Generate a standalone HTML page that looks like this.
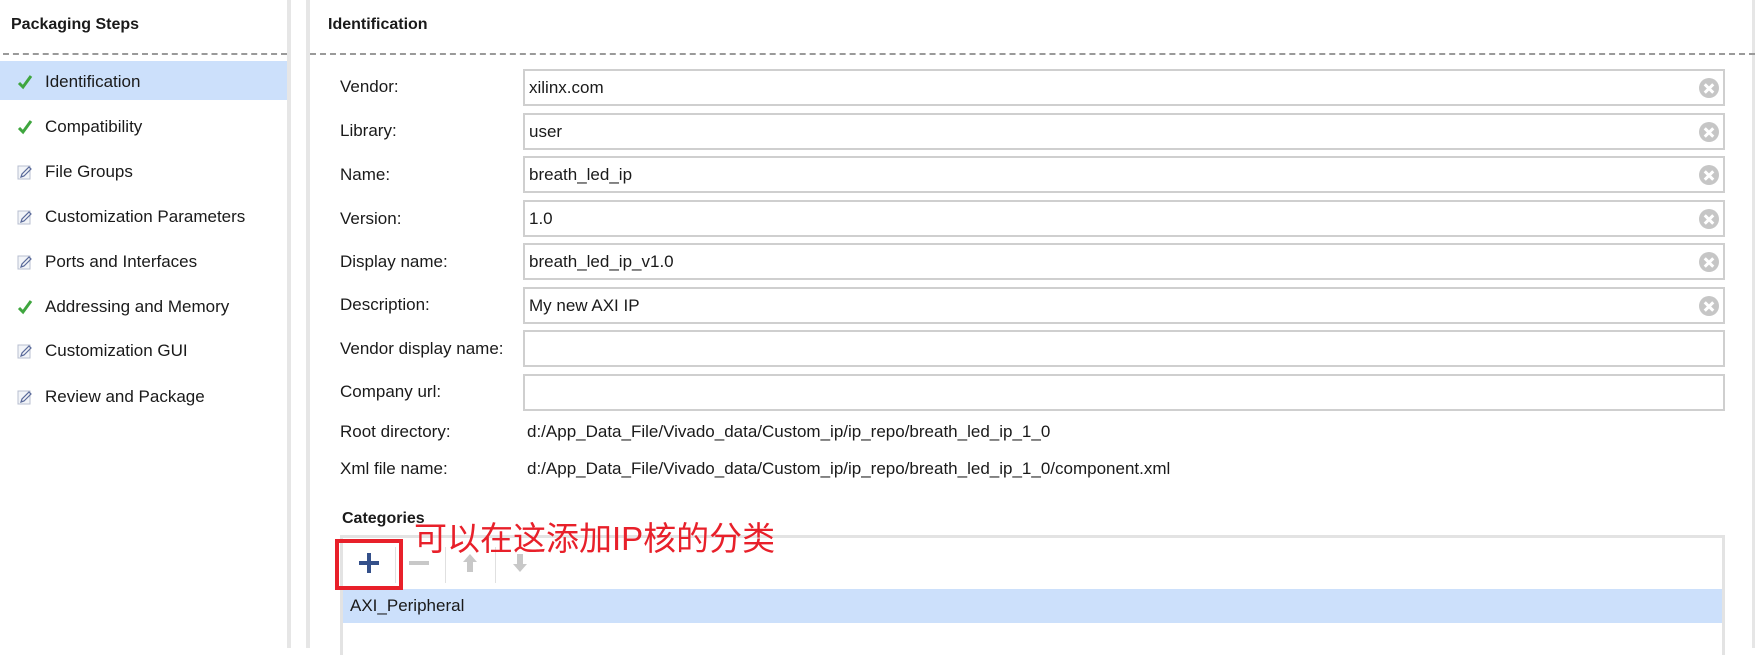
<!DOCTYPE html>
<html><head><meta charset="utf-8"><style>
*{margin:0;padding:0;box-sizing:border-box}
body{width:1755px;height:648px;background:#fff;position:relative;overflow:hidden;font-family:"Liberation Sans","Noto Sans CJK SC",sans-serif;color:#1a1a1a;font-size:17px}
.a{position:absolute;white-space:nowrap}
.dash{position:absolute;height:0;border-top:2px dashed #9a9a9a}
.bar{position:absolute;top:0;height:648px;width:4px;background:#e6e6e6}
.item{position:absolute;left:45px;transform:translateY(-50%)}
.ic{position:absolute;left:17px;transform:translateY(-50%);width:16px;height:16px}
.lbl{position:absolute;left:340px;transform:translateY(-50%)}
.fld{position:absolute;left:523px;width:1202px;height:37px;border:2px solid #cfcfcf;background:#fff;padding-left:4px;line-height:33px}
.clr{position:absolute;right:4px;top:7px;width:20px;height:20px;border-radius:50%;background:#c6c6c6}
.clr:before,.clr:after{content:"";position:absolute;left:4px;top:8.5px;width:12px;height:3px;background:#fff;transform:rotate(45deg)}
.clr:after{transform:rotate(-45deg)}
</style></head><body>
<div class="a" style="left:11px;top:16px;font-weight:bold;font-size:16px">Packaging Steps</div>
<div class="dash" style="left:3px;top:53px;width:284px"></div>
<div class="a" style="left:0;top:61px;width:287px;height:39px;background:#cce0fb"></div>
<div class="bar" style="left:287px"></div>
<div class="bar" style="left:306px"></div>
<div class="a" style="left:1752px;top:0;width:3px;height:648px;background:#e6e6e6"></div>

<svg class="ic" style="top:82px" viewBox="0 0 16 16"><path d="M2 9 L6 13 L14 2" stroke="#3fa63f" stroke-width="3" fill="none"/></svg><div class="item" style="top:82px">Identification</div>
<svg class="ic" style="top:127px" viewBox="0 0 16 16"><path d="M2 9 L6 13 L14 2" stroke="#3fa63f" stroke-width="3" fill="none"/></svg><div class="item" style="top:127px">Compatibility</div>
<svg class="ic" style="top:172px" viewBox="0 0 16 16"><rect x="1" y="2" width="12" height="13" fill="#f2f4f8" stroke="#b8bfd0"/><path d="M4 13 L5 10 L12 3 L14 5 L7 12Z" fill="none" stroke="#5a6a9a" stroke-width="1.2"/></svg><div class="item" style="top:172px">File Groups</div>
<svg class="ic" style="top:217px" viewBox="0 0 16 16"><rect x="1" y="2" width="12" height="13" fill="#f2f4f8" stroke="#b8bfd0"/><path d="M4 13 L5 10 L12 3 L14 5 L7 12Z" fill="none" stroke="#5a6a9a" stroke-width="1.2"/></svg><div class="item" style="top:217px">Customization Parameters</div>
<svg class="ic" style="top:262px" viewBox="0 0 16 16"><rect x="1" y="2" width="12" height="13" fill="#f2f4f8" stroke="#b8bfd0"/><path d="M4 13 L5 10 L12 3 L14 5 L7 12Z" fill="none" stroke="#5a6a9a" stroke-width="1.2"/></svg><div class="item" style="top:262px">Ports and Interfaces</div>
<svg class="ic" style="top:307px" viewBox="0 0 16 16"><path d="M2 9 L6 13 L14 2" stroke="#3fa63f" stroke-width="3" fill="none"/></svg><div class="item" style="top:307px">Addressing and Memory</div>
<svg class="ic" style="top:351px" viewBox="0 0 16 16"><rect x="1" y="2" width="12" height="13" fill="#f2f4f8" stroke="#b8bfd0"/><path d="M4 13 L5 10 L12 3 L14 5 L7 12Z" fill="none" stroke="#5a6a9a" stroke-width="1.2"/></svg><div class="item" style="top:351px">Customization GUI</div>
<svg class="ic" style="top:397px" viewBox="0 0 16 16"><rect x="1" y="2" width="12" height="13" fill="#f2f4f8" stroke="#b8bfd0"/><path d="M4 13 L5 10 L12 3 L14 5 L7 12Z" fill="none" stroke="#5a6a9a" stroke-width="1.2"/></svg><div class="item" style="top:397px">Review and Package</div>

<div class="a" style="left:328px;top:16px;font-weight:bold;font-size:16px">Identification</div>
<div class="dash" style="left:310px;top:53px;width:1445px"></div>

<div class="lbl" style="top:87px">Vendor:</div><div class="fld" style="top:69px">xilinx.com<div class="clr"></div></div>
<div class="lbl" style="top:131px">Library:</div><div class="fld" style="top:113px">user<div class="clr"></div></div>
<div class="lbl" style="top:175px">Name:</div><div class="fld" style="top:156px">breath_led_ip<div class="clr"></div></div>
<div class="lbl" style="top:219px">Version:</div><div class="fld" style="top:200px">1.0<div class="clr"></div></div>
<div class="lbl" style="top:262px">Display name:</div><div class="fld" style="top:243px">breath_led_ip_v1.0<div class="clr"></div></div>
<div class="lbl" style="top:305px">Description:</div><div class="fld" style="top:287px">My new AXI IP<div class="clr"></div></div>
<div class="lbl" style="top:349px">Vendor display name:</div><div class="fld" style="top:330px"></div>
<div class="lbl" style="top:392px">Company url:</div><div class="fld" style="top:374px"></div>
<div class="lbl" style="top:432px">Root directory:</div><div class="a" style="left:527px;top:432px;transform:translateY(-50%)">d:/App_Data_File/Vivado_data/Custom_ip/ip_repo/breath_led_ip_1_0</div>
<div class="lbl" style="top:469px">Xml file name:</div><div class="a" style="left:527px;top:469px;transform:translateY(-50%)">d:/App_Data_File/Vivado_data/Custom_ip/ip_repo/breath_led_ip_1_0/component.xml</div>

<div class="a" style="left:342px;top:510px;font-weight:bold;font-size:16px">Categories</div>
<div class="a" style="left:340px;top:535px;width:1385px;height:120px;border:3px solid #e3e3e3;border-bottom:none"></div>
<div class="a" style="left:343px;top:589px;width:1379px;height:34px;background:#cce0fb"></div>
<div class="a" style="left:350px;top:606px;transform:translateY(-50%)">AXI_Peripheral</div>
<div class="a" style="left:395px;top:547px;width:1px;height:36px;background:#e0e0e0"></div>
<div class="a" style="left:445px;top:547px;width:1px;height:36px;background:#e0e0e0"></div>
<div class="a" style="left:495px;top:547px;width:1px;height:36px;background:#e0e0e0"></div>
<svg class="a" style="left:358px;top:552px" width="22" height="22" viewBox="0 0 22 22"><path d="M11 1V21M1 11H21" stroke="#34508a" stroke-width="4"/></svg>
<div class="a" style="left:409px;top:561px;width:20px;height:4px;background:#c8c8c8"></div>
<svg class="a" style="left:462px;top:553px" width="16" height="20" viewBox="0 0 16 20"><path d="M8 1L15 9H11V19H5V9H1Z" fill="#c8c8c8"/></svg>
<svg class="a" style="left:512px;top:553px" width="16" height="20" viewBox="0 0 16 20"><path d="M8 19L15 11H11V1H5V11H1Z" fill="#c8c8c8"/></svg>
<div class="a" style="left:335px;top:539px;width:68px;height:51px;border:4px solid #e8202a"></div>
<div class="a" style="left:414px;top:519px;font-size:33px;color:#e8202a;line-height:40px">可以在这添加IP核的分类</div>
</body></html>
